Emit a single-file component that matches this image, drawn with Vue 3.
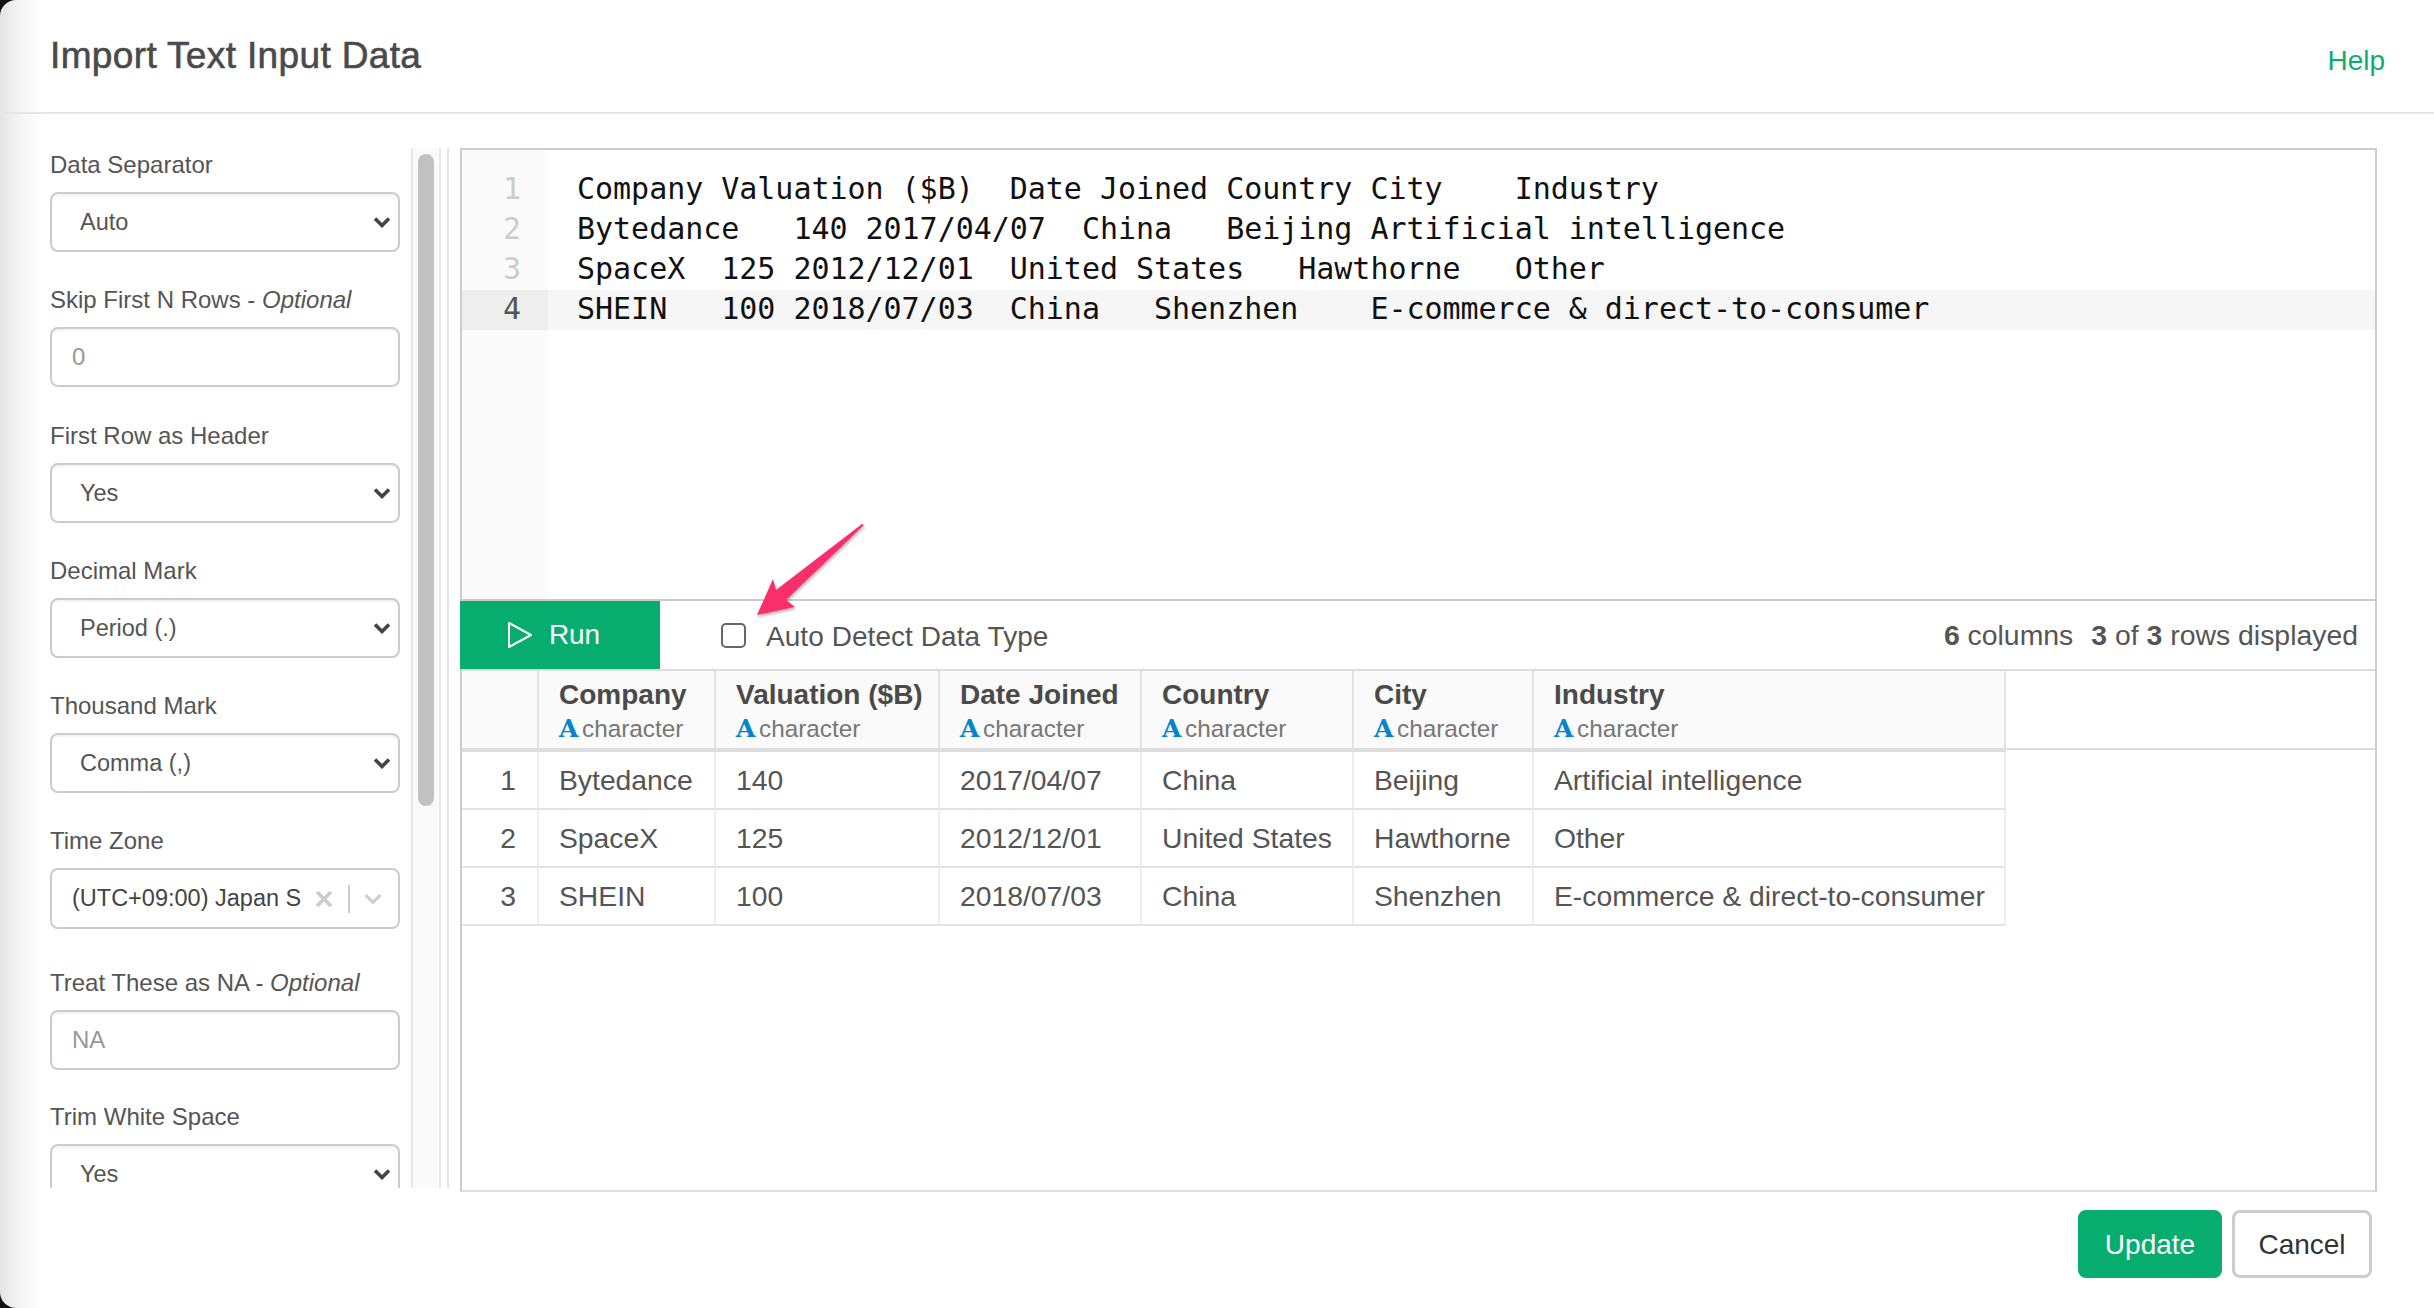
<script setup>
const fields = [
  { label: 'Data Separator', kind: 'select', value: 'Auto' },
  { label: 'Skip First N Rows', optional: true, kind: 'input', placeholder: '0' },
  { label: 'First Row as Header', kind: 'select', value: 'Yes' },
  { label: 'Decimal Mark', kind: 'select', value: 'Period (.)' },
  { label: 'Thousand Mark', kind: 'select', value: 'Comma (,)' },
  { label: 'Time Zone', kind: 'zone', value: '(UTC+09:00) Japan S' },
  { label: 'Treat These as NA', optional: true, kind: 'input', placeholder: 'NA' },
  { label: 'Trim White Space', kind: 'select', value: 'Yes' }
]
const code = [
  'Company\tValuation ($B)\tDate Joined\tCountry\tCity\tIndustry',
  'Bytedance\t140\t2017/04/07\tChina\tBeijing\tArtificial intelligence',
  'SpaceX\t125\t2012/12/01\tUnited States\tHawthorne\tOther',
  'SHEIN\t100\t2018/07/03\tChina\tShenzhen\tE-commerce & direct-to-consumer'
]
const columns = [
  { name: 'Company', width: 177 },
  { name: 'Valuation ($B)', width: 224 },
  { name: 'Date Joined', width: 202 },
  { name: 'Country', width: 212 },
  { name: 'City', width: 180 },
  { name: 'Industry', width: 472 }
]
const rows = [
  ['Bytedance', '140', '2017/04/07', 'China', 'Beijing', 'Artificial intelligence'],
  ['SpaceX', '125', '2012/12/01', 'United States', 'Hawthorne', 'Other'],
  ['SHEIN', '100', '2018/07/03', 'China', 'Shenzhen', 'E-commerce & direct-to-consumer']
]
</script>

<template>
  <div class="modal">
    <header class="head">
      <h1 class="title">Import Text Input Data</h1>
      <a class="help">Help</a>
    </header>

    <div class="body">
      <aside class="side">
        <div v-for="f in fields" :key="f.label" class="field" :class="'k-' + f.kind">
          <label class="lab">{{ f.label }}<template v-if="f.optional"> - <i>Optional</i></template></label>
          <div v-if="f.kind === 'select'" class="sel-wrap">
            <select class="ctl sel"><option>{{ f.value }}</option></select>
            <svg class="chev" width="18" height="12" viewBox="0 0 18 12"><path d="M2 2.5 9 9.5 16 2.5" fill="none" stroke="#444" stroke-width="3.6"/></svg>
          </div>
          <input v-else-if="f.kind === 'input'" class="ctl inp" :placeholder="f.placeholder" />
          <div v-else class="ctl zone">
            <span class="zone-val">{{ f.value }}</span>
            <svg class="zx" width="18" height="18" viewBox="0 0 18 18"><path d="M2 2 16 16M16 2 2 16" stroke="#ccc" stroke-width="3.800"/></svg>
            <span class="zdiv"></span>
            <svg class="zc" width="18" height="12" viewBox="0 0 18 12"><path d="M1.5 2 9 9.5 16.500 2" fill="none" stroke="#ccc" stroke-width="3"/></svg>
          </div>
        </div>
      </aside>
      <div class="gutterbar"><div class="thumb"></div></div>
      <div class="resizer"></div>

      <main class="main">
        <section class="editor">
          <div class="nums">
            <div v-for="(l, i) in code" :key="i" class="num" :class="{ on: i === 3 }">{{ i + 1 }}</div>
          </div>
          <div class="lines">
            <div v-for="(l, i) in code" :key="i" class="line" :class="{ on: i === 3 }">{{ l }}</div>
          </div>
        </section>

        <section class="tools">
          <button class="run">
            <svg width="26" height="28" viewBox="0 0 26 28"><path d="M2 2 24 14 2 26Z" fill="none" stroke="#fff" stroke-width="2" stroke-linejoin="round"/></svg>
            <span>Run</span>
          </button>
          <label class="auto"><span class="box"></span>Auto Detect Data Type</label>
          <div class="stats"><b>6</b> columns<b class="gap">3</b> of <b>3</b> rows displayed</div>
        </section>

        <section class="tablewrap">
          <table class="grid">
            <colgroup>
              <col style="width: 77px" />
              <col v-for="c in columns" :key="c.name" :style="{ width: c.width + 'px' }" />
            </colgroup>
            <thead>
              <tr>
                <th></th>
                <th v-for="c in columns" :key="c.name">
                  <div class="cname">{{ c.name }}</div>
                  <div class="ctype"><span class="a">A</span>character</div>
                </th>
              </tr>
            </thead>
            <tbody>
              <tr v-for="(r, i) in rows" :key="i">
                <td class="rn">{{ i + 1 }}</td>
                <td v-for="(v, j) in r" :key="j">{{ v }}</td>
              </tr>
            </tbody>
          </table>
        </section>
      </main>
    </div>

    <footer class="foot">
      <button class="btn primary">Update</button>
      <button class="btn">Cancel</button>
    </footer>

    <svg class="arrow" width="130" height="110" viewBox="750 518 130 110">
      <defs>
        <filter id="sh" x="-20%" y="-20%" width="140%" height="140%">
          <feDropShadow dx="1" dy="2" stdDeviation="1.6" flood-color="#000" flood-opacity=".3"/>
        </filter>
      </defs>
      <path d="M864 525 786 600 795 607 757 615 773 579 776 590 862 524Z" fill="#fb2d6c" filter="url(#sh)"/>
    </svg>
  </div>
</template>

<style>
html, body { margin: 0; height: 100%; background: linear-gradient(90deg, #111 50%, #fff 50%); }
</style>

<style scoped>
.modal {
  position: relative;
  width: 2434px;
  height: 1308px;
  overflow: hidden;
  box-sizing: border-box;
  display: flex;
  flex-direction: column;
  border-radius: 16px;
  background: linear-gradient(90deg, #e4e4e4 0, #f6f6f6 22px, #fff 44px);
  font-family: "Liberation Sans", Arial, sans-serif;
  color: #555;
}
.head {
  height: 112px;
  flex: none;
  display: flex;
  justify-content: space-between;
  border-bottom: 2px solid #e5e5e5;
  padding: 0 49px 0 50px;
}
.title {
  margin: 34px 0 0;
  font-size: 37px;
  line-height: 44px;
  letter-spacing: 0.36px;
  font-weight: 400;
  color: #4a4a4a;
  -webkit-text-stroke: 0.6px #4a4a4a;
}
.help {
  margin-top: 44px;
  font-size: 28px;
  line-height: 34px;
  color: #10ad6f;
}
.body {
  display: flex;
  align-items: flex-start;
  padding-top: 34px;
}
.side {
  width: 350px;
  height: 1038px;
  overflow: hidden;
  flex: none;
  padding: 2px 11px 0 50px;
}
.field { margin-bottom: 33.3px; }
.k-zone { margin-bottom: 38.5px; }
.k-zone .ctl { height: 61px; }
.field:nth-child(7) { margin-bottom: 32px; }
.lab {
  display: block;
  height: 30px;
  margin-bottom: 12px;
  font-size: 24px;
  line-height: 30px;
  color: #555;
}
.ctl {
  display: block;
  box-sizing: border-box;
  width: 350px;
  height: 60px;
  background: #fff;
  border: 2.500px solid #ccc;
  border-radius: 8px;
  box-shadow: inset 0 2px 2px rgba(0, 0, 0, .05);
  font-family: inherit;
  font-size: 23.500px;
  color: #555;
  margin: 0;
  outline: 0;
}
.sel-wrap { position: relative; }
.sel {
  appearance: none;
  padding-left: 28px;
}
.chev { position: absolute; right: 9px; top: 24px; }
.inp { padding-left: 20px; font-size: 24px; }
.inp::placeholder { color: #999; opacity: 1; }
.zone {
  display: flex;
  align-items: center;
  padding-left: 20px;
  box-shadow: none;
}
.zone-val {
  width: 228px;
  flex: none;
  white-space: nowrap;
  color: #444;
}
.zx { margin-left: 15px; flex: none; }
.zdiv { width: 2px; height: 28px; background: #ccc; margin-left: 15px; flex: none; }
.zc { margin-left: 14px; flex: none; }
.gutterbar {
  height: 1040px;
  flex: none;
  background: #fafafa;
  border-left: 2px solid #e8e8e8;
  border-right: 2px solid #e8e8e8;
  padding: 6px 5px 0;
  box-sizing: border-box;
  width: 30px;
  overflow: hidden;
}
.thumb {
  width: 16px;
  height: 652px;
  border-radius: 8px;
  background: #c1c1c1;
}
.resizer {
  width: 6px;
  height: 1040px;
  flex: none;
  border-right: 2px solid #e3e3e3;
}
.main {
  margin-left: 11px;
  width: 1917px;
  height: 1044px;
  flex: none;
  box-sizing: border-box;
  border: 2px solid #ccc;
  border-bottom-color: #ddd;
  display: flex;
  flex-direction: column;
}
.editor {
  height: 449px;
  flex: none;
  display: flex;
}
.nums {
  width: 86px;
  flex: none;
  padding-top: 20px;
  background: #fafafa;
}
.num {
  height: 40px;
  line-height: 38px;
  padding-right: 27px;
  text-align: right;
  font-family: "DejaVu Sans Mono", monospace;
  font-size: 30px;
  color: #ccc;
}
.num.on { background: #eee; color: #555; }
.lines { flex: 1; padding-top: 20px; }
.line {
  height: 40px;
  line-height: 38px;
  padding-left: 29px;
  font-family: "DejaVu Sans Mono", monospace;
  font-size: 30px;
  letter-spacing: -0.03px;
  color: #111;
  white-space: pre;
  tab-size: 4;
}
.line.on { background: #f6f6f6; }
.tools {
  height: 68px;
  flex: none;
  box-sizing: content-box;
  border-top: 2px solid #ccc;
  display: flex;
  align-items: center;
  font-size: 28px;
}
.run {
  width: 200px;
  height: 68px;
  margin-left: -2px;
  padding: 0 0 0 47px;
  display: flex;
  align-items: center;
  gap: 16px;
  background: #07ad6e;
  color: #fff;
  border: 0;
  font: inherit;
  letter-spacing: -0.2px;
}
.auto {
  margin-left: 60px;
  padding-top: 3px;
  display: flex;
  align-items: center;
  letter-spacing: 0.06px;
  color: #555;
}
.box {
  width: 25px;
  height: 25px;
  box-sizing: border-box;
  margin: -3px 20px 0 1px;
  border: 2.500px solid #666;
  border-radius: 5px;
}
.stats {
  margin-left: auto;
  margin-right: 17px;
  font-size: 28.400px;
  color: #555;
}
.gap { margin-left: 18px; }
.tablewrap {
  flex: 1;
  border-top: 2px solid #ddd;
  background: linear-gradient(#ddd, #ddd) no-repeat 0 77px / 100% 2px;
}
.grid {
  table-layout: fixed;
  width: 1544px;
  border-collapse: separate;
  border-spacing: 0;
  font-size: 28.300px;
  color: #555;
}
th {
  box-sizing: content-box;
  height: 70px;
  padding: 7px 0 0 20px;
  vertical-align: top;
  text-align: left;
  background: #fafafa;
  border-right: 2px solid #e3e3e3;
  border-bottom: 4px solid #ddd;
}
td {
  padding: 1px 0 0 20px;
  box-sizing: content-box;
  height: 55px;
  border-right: 2px solid #eee;
  border-bottom: 2px solid #e3e3e3;
  white-space: nowrap;
}
td.rn { text-align: right; padding: 1px 21px 0 0; }
.cname {
  font-weight: 700;
  font-size: 28px;
  line-height: 34px;
  color: #4a4a4a;
}
.ctype {
  font-weight: 400;
  font-size: 24.300px;
  line-height: 33px;
  color: #777;
  display: flex;
}
.a {
  width: 23px;
  font-family: "DejaVu Serif", serif;
  font-weight: 700;
  font-size: 25px;
  color: #0284d0;
}
.foot {
  position: absolute;
  right: 62px;
  top: 1210px;
  display: flex;
  gap: 10px;
}
.btn {
  height: 68px;
  width: 140px;
  box-sizing: border-box;
  background: #fff;
  border: 3px solid #ccc;
  border-radius: 8px;
  font-family: inherit;
  font-size: 28px;
  color: #333;
  padding: 2px 0 0;
}
.btn.primary {
  width: 144px;
  background: #07ad6e;
  border-color: #07ad6e;
  color: #fff;
}
.arrow {
  position: absolute;
  left: 750px;
  top: 518px;
}
</style>
